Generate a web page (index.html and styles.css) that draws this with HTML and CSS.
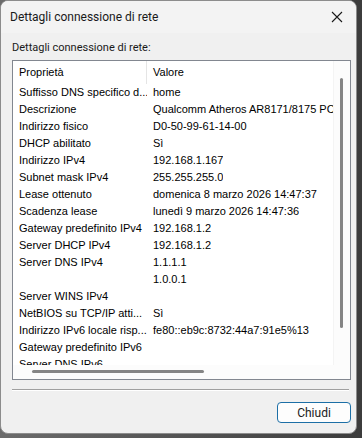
FILE: index.html
```html
<!DOCTYPE html>
<html lang="it">
<head>
    <meta charset="UTF-8">
    <meta name="viewport" content="width=device-width, initial-scale=1.0">
    <title>Dettagli connessione di rete</title>
    <link rel="stylesheet" href="styles.css">
</head>
<body>
    <div class="window">
        <div class="titlebar">
            <span class="title">Dettagli connessione di rete</span>
            <svg class="close" width="12" height="12" viewBox="0 0 12 12">
                <path d="M1 1 L11 11 M11 1 L1 11" stroke="#1a1a1a" stroke-width="1.1" fill="none"/>
            </svg>
        </div>
        <div class="content">
            <div class="label">Dettagli connessione di rete:</div>
            <div class="listview">
                <div class="list-main">
                    <div class="row header">
                        <div class="col prop">Proprietà</div>
                        <div class="col val">Valore</div>
                    </div>
                    <div class="row"><div class="col prop">Suffisso DNS specifico d...</div><div class="col val">home</div></div>
                    <div class="row"><div class="col prop">Descrizione</div><div class="col val">Qualcomm Atheros AR8171/8175 PC</div></div>
                    <div class="row"><div class="col prop">Indirizzo fisico</div><div class="col val">D0-50-99-61-14-00</div></div>
                    <div class="row"><div class="col prop">DHCP abilitato</div><div class="col val">Sì</div></div>
                    <div class="row"><div class="col prop">Indirizzo IPv4</div><div class="col val">192.168.1.167</div></div>
                    <div class="row"><div class="col prop">Subnet mask IPv4</div><div class="col val">255.255.255.0</div></div>
                    <div class="row"><div class="col prop">Lease ottenuto</div><div class="col val">domenica 8 marzo 2026 14:47:37</div></div>
                    <div class="row"><div class="col prop">Scadenza lease</div><div class="col val">lunedì 9 marzo 2026 14:47:36</div></div>
                    <div class="row"><div class="col prop">Gateway predefinito IPv4</div><div class="col val">192.168.1.2</div></div>
                    <div class="row"><div class="col prop">Server DHCP IPv4</div><div class="col val">192.168.1.2</div></div>
                    <div class="row"><div class="col prop">Server DNS IPv4</div><div class="col val">1.1.1.1</div></div>
                    <div class="row"><div class="col prop"></div><div class="col val">1.0.0.1</div></div>
                    <div class="row"><div class="col prop">Server WINS IPv4</div><div class="col val"></div></div>
                    <div class="row"><div class="col prop">NetBIOS su TCP/IP atti...</div><div class="col val">Sì</div></div>
                    <div class="row"><div class="col prop">Indirizzo IPv6 locale risp...</div><div class="col val">fe80::eb9c:8732:44a7:91e5%13</div></div>
                    <div class="row"><div class="col prop">Gateway predefinito IPv6</div><div class="col val"></div></div>
                    <div class="row"><div class="col prop">Server DNS IPv6</div><div class="col val"></div></div>
                </div>
                <div class="vscroll"><div class="vthumb"></div></div>
                <div class="hscroll"><div class="hthumb"></div></div>
                <div class="corner"></div>
            </div>
            <div class="separator"></div>
            <div class="actions">
                <button class="btn">Chiudi</button>
            </div>
        </div>
    </div>
</body>
</html>
```

FILE: styles.css
```css
body {
    margin: 0;
    width: 362px;
    height: 438px;
    background: linear-gradient(90deg, #6b6b6b, #3c3c3c);
    font-family: "Liberation Sans", Arial, sans-serif;
    overflow: hidden;
}

.window {
    width: 355px;
    height: 432px;
    background: #f0f0f0;
    border: 1px solid #8c8c8c;
    border-radius: 8px;
    overflow: hidden;
    display: flex;
    flex-direction: column;
}

.titlebar {
    height: 32px;
    flex: none;
    display: flex;
    align-items: center;
    justify-content: space-between;
    padding: 0 13px 0 9px;
    background: #f3f3f3;
}

.title {
    font-family: Roboto, sans-serif;
    font-size: 12px;
    color: #1a1a1a;
}

.content {
    padding: 0 5px 0 11px;
}

.label {
    font-family: Roboto, sans-serif;
    font-size: 11px;
    color: #1a1a1a;
    height: 16px;
    line-height: 16px;
    margin-top: 7px;
}

.listview {
    margin-top: 4px;
    width: 337px;
    height: 318px;
    border: 1px solid #828790;
    background: #fff;
    display: grid;
    grid-template-columns: 320px 17px;
    grid-template-rows: 304px 14px;
}

.list-main {
    width: 320px;
    min-width: 0;
    overflow: hidden;
    font-size: 11px;
    color: #000;
}

.row {
    display: flex;
    height: 17px;
    line-height: 17px;
}

.row.header {
    height: 23px;
    line-height: 23px;
}

.col {
    white-space: nowrap;
    overflow: hidden;
}

.prop {
    width: 128px;
    padding-left: 6px;
    flex: none;
}

.val {
    padding-left: 6px;
    min-width: 0;
}

.header .prop {
    border-right: 1px solid #e5e5e5;
    width: 127px;
}

.vscroll {
    background: #fcfcfc;
    border-left: 1px solid #f4f4f4;
    position: relative;
}

.vthumb {
    position: absolute;
    left: 6px;
    top: 17px;
    width: 3px;
    height: 250px;
    border-radius: 2px;
    background: #858585;
}

.hscroll {
    background: #fcfcfc;
    position: relative;
}

.hthumb {
    position: absolute;
    left: 19px;
    top: 5px;
    width: 172px;
    height: 3px;
    border-radius: 2px;
    background: #858585;
}

.corner {
    background: #fcfcfc;
}

.separator {
    margin-top: 9px;
    width: 337px;
    border-top: 1px solid #a0a0a0;
    border-bottom: 1px solid #fff;
}

.actions {
    display: flex;
    justify-content: flex-end;
    margin-top: 11px;
}

.btn {
    width: 74px;
    height: 21px;
    padding: 0;
    font-family: Roboto, sans-serif;
    font-size: 12px;
    color: #1a1a1a;
    background: #fdfdfd;
    border: 1px solid #1c6fa6;
    border-radius: 4px;
}
```
